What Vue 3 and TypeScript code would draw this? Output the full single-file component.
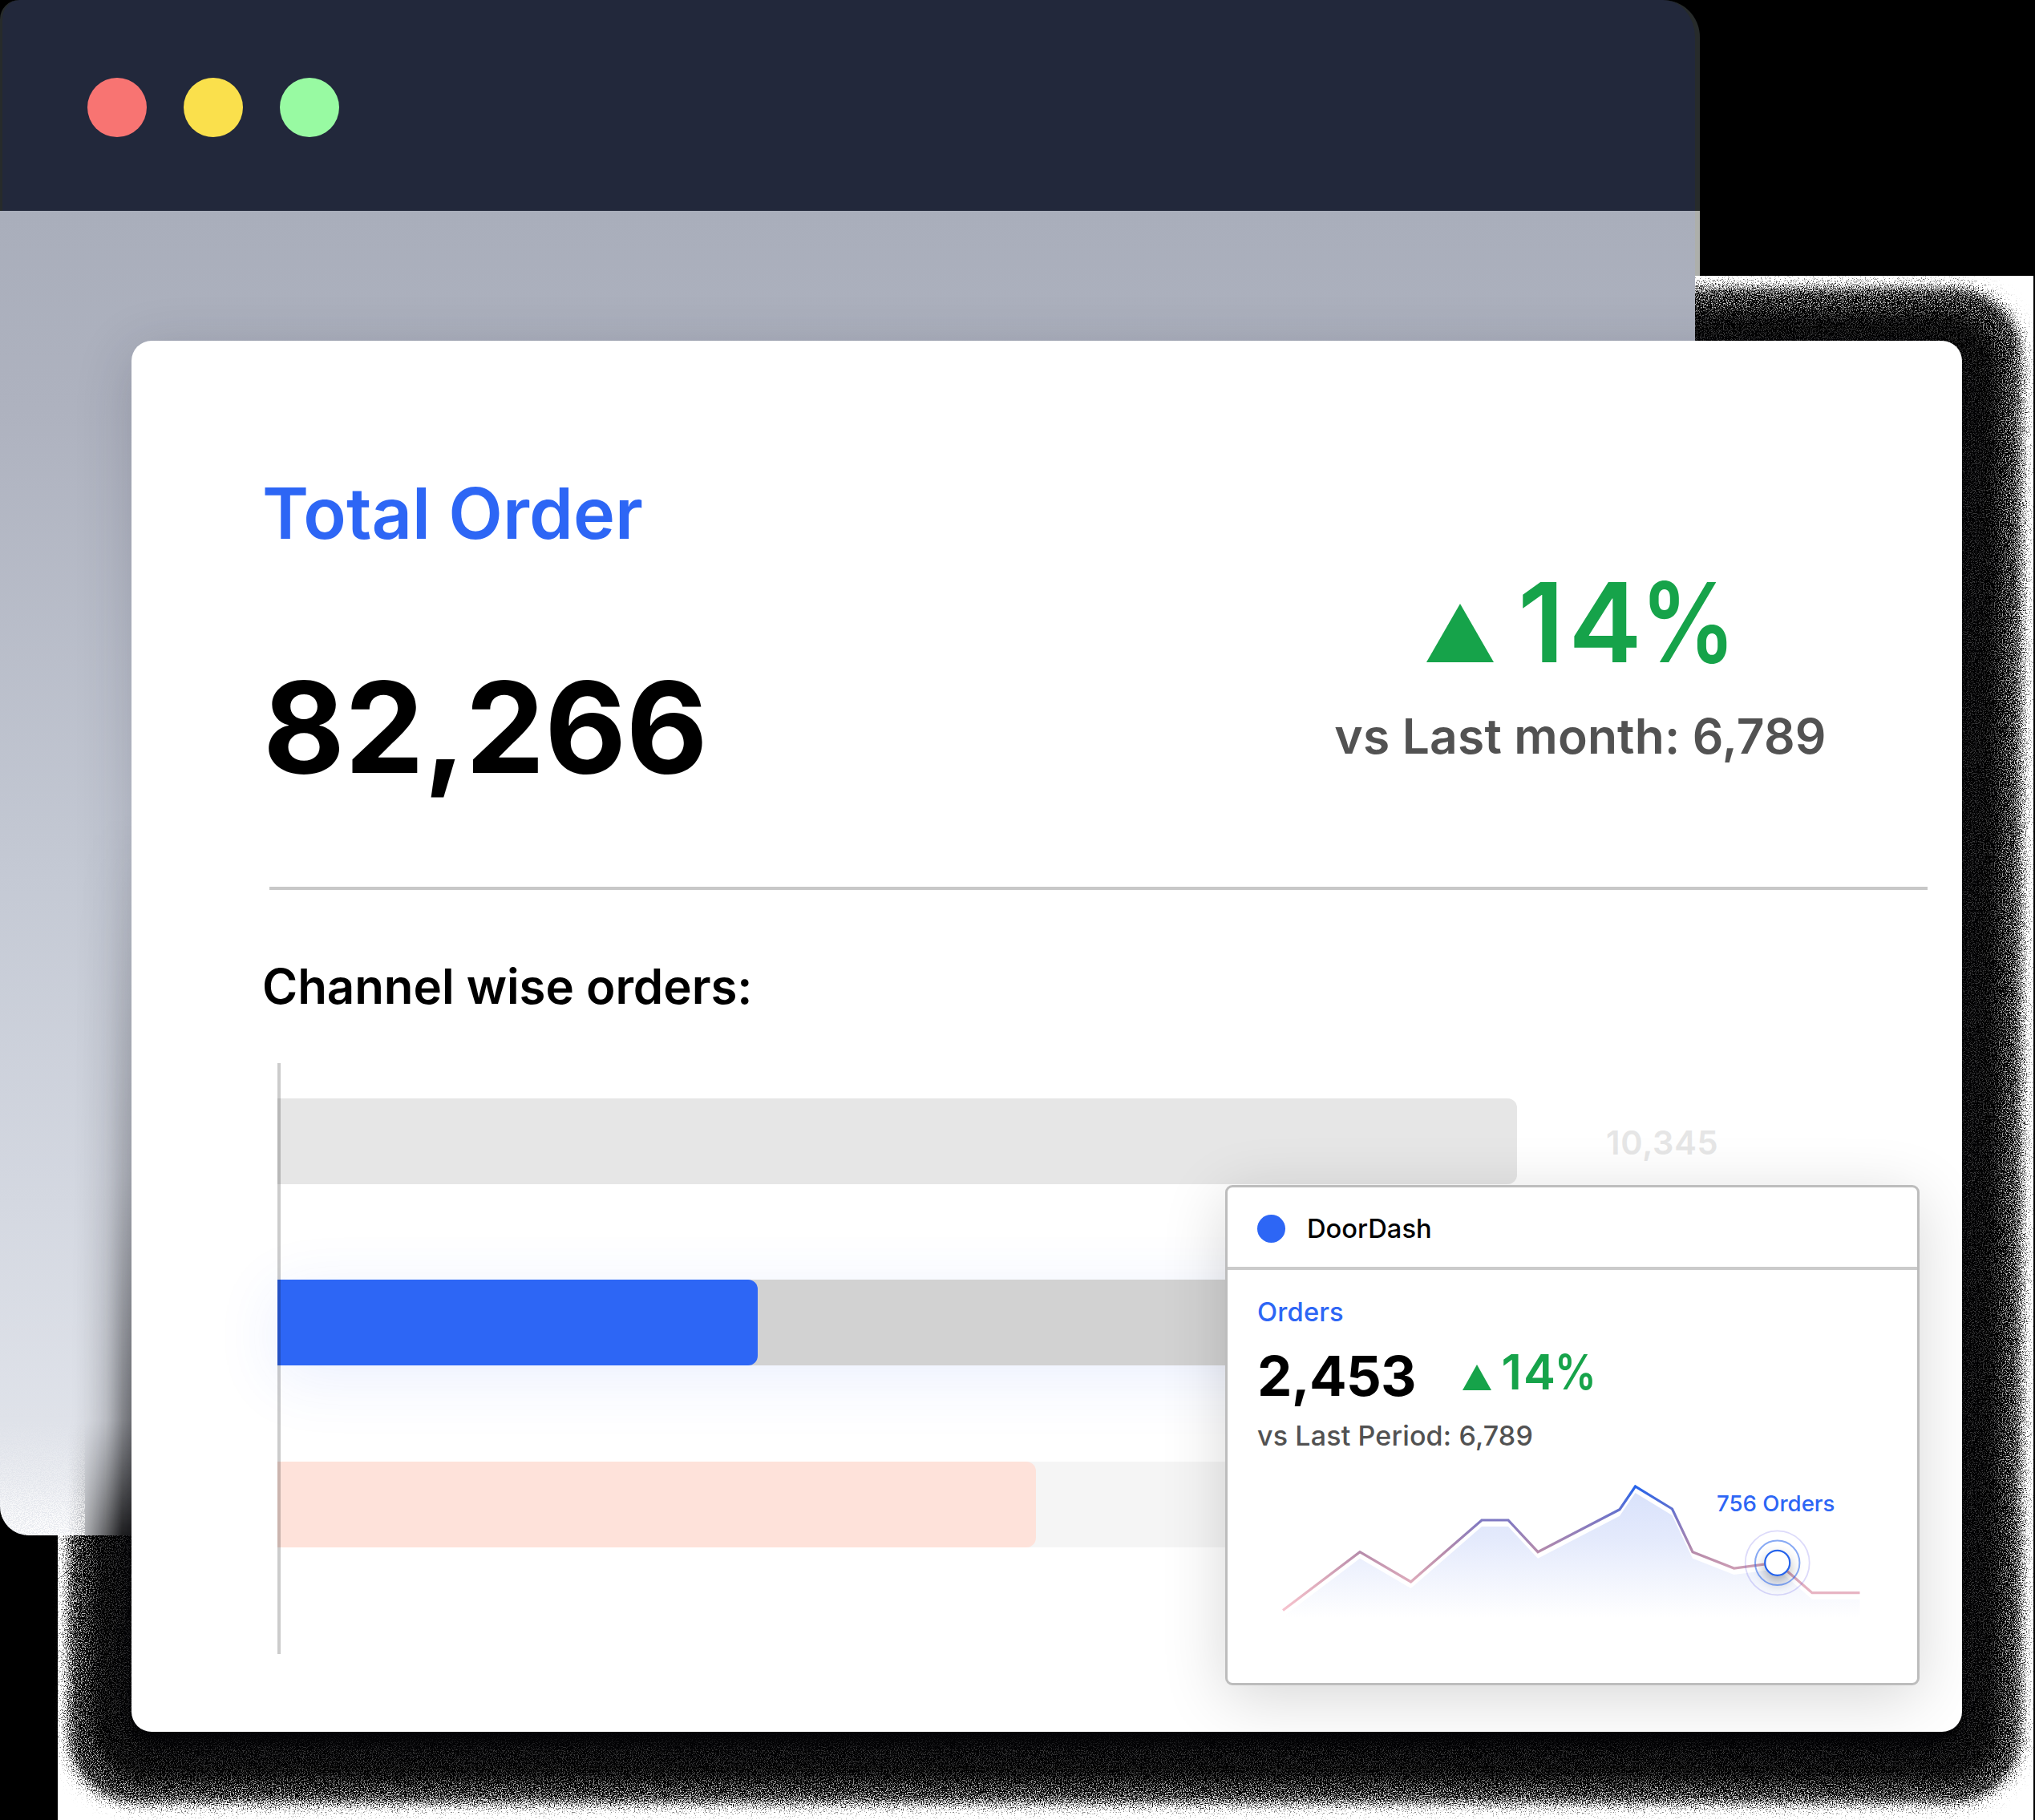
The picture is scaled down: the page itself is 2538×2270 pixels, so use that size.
<script setup lang="ts">
interface Channel { name: string; cls: string; value: number; total?: string }

const channels: Channel[] = [
  { name: 'first', cls: 'muted', value: 1546, total: '10,345' },
  { name: 'doordash', cls: 'active', value: 599 },
  { name: 'third', cls: 'peach', value: 946 },
]
const lights: string[] = ['#f87472', '#fae04c', '#98faa2']

const points: [number, number][] = [
  [14, 168.5], [110, 95.7], [173.6, 133], [262, 56], [295, 56], [332, 95.7], [434, 42.7],
  [453.5, 14], [499.5, 42], [525, 95.7], [576.6, 116], [630.7, 109], [674, 146.7], [733.5, 146.7],
]
const line = points.map((p) => p.join(',')).join(' ')
const area = points.map(([x, y]) => `${x},${y + 8}`).join(' ') + ' 733.5,185 14,185'
</script>

<template>
  <main class="scene">
    <svg class="halo" viewBox="0 0 2538 2270" aria-hidden="true">
      <defs>
        <filter id="grain" filterUnits="userSpaceOnUse" x="0" y="300" width="2538" height="1970" color-interpolation-filters="sRGB">
          <feGaussianBlur in="SourceGraphic" stdDeviation="13" result="soft" />
          <feTurbulence type="fractalNoise" baseFrequency="0.83" numOctaves="2" seed="4" />
          <feColorMatrix type="matrix" values="0 0 0 0 0  0 0 0 0 0  0 0 0 0 0  2.6 0 0 0 -0.8" result="noise" />
          <feComposite in="soft" in2="noise" operator="arithmetic" k2="3" k3="-2" />
        </filter>
        <filter id="specks" filterUnits="userSpaceOnUse" x="0" y="300" width="2538" height="1970" color-interpolation-filters="sRGB">
          <feGaussianBlur in="SourceGraphic" stdDeviation="11" result="soft" />
          <feTurbulence type="fractalNoise" baseFrequency="0.79" numOctaves="2" seed="9" />
          <feColorMatrix type="matrix" values="0 0 0 0 1  0 0 0 0 1  0 0 0 0 1  9 0 0 0 -4.8" result="noise" />
          <feComposite in="soft" in2="noise" operator="arithmetic" k1="1.3" />
        </filter>
      </defs>
      <path fill="#fff" d="M72 344H2536V2270H72Z" />
      <rect x="86" y="360" width="2434" height="1888" rx="84" filter="url(#grain)" />
      <rect x="128" y="398" width="2352" height="1812" rx="60" fill="none" stroke="#fff" stroke-width="66" opacity=".24" filter="url(#specks)" />
      <rect x="100" y="375" width="2408" height="1861" rx="84" fill="none" stroke="#fff" stroke-width="18" filter="url(#specks)" />
    </svg>

    <section class="window">
      <header class="titlebar">
        <span v-for="c in lights" :key="c" class="light" :style="{ background: c }"></span>
      </header>
      <div class="window-body">
        <div class="fade"></div>
        <svg class="dust" viewBox="0 0 164 150" width="164" height="150" aria-hidden="true">
          <defs>
            <linearGradient id="rise" x1="0" y1="0" x2="0" y2="1">
              <stop offset="0" stop-color="#fff" stop-opacity="0" />
              <stop offset=".55" stop-color="#fff" stop-opacity=".35" />
              <stop offset="1" stop-color="#fff" />
            </linearGradient>
            <filter id="dusty" x="0" y="0" width="1" height="1" color-interpolation-filters="sRGB">
              <feTurbulence type="fractalNoise" baseFrequency="0.8" numOctaves="2" seed="2" />
              <feColorMatrix type="matrix" values="0 0 0 0 1  0 0 0 0 1  0 0 0 0 1  6 0 0 0 -2.4" result="noise" />
              <feComposite in="SourceGraphic" in2="noise" operator="arithmetic" k1="1" />
            </filter>
          </defs>
          <rect width="106" height="150" fill="url(#rise)" filter="url(#dusty)" />
        </svg>
      </div>
    </section>

    <article class="card">
      <div class="summary">
        <div>
          <h1>Total Order</h1>
          <p class="total">82,266</p>
        </div>
        <div class="compare">
          <div class="delta">
            <svg width="84" height="73" viewBox="0 0 84 73"><path d="M42 0L84 73H0Z" /></svg>
            <span><b>1</b>4<em>%</em></span>
          </div>
          <p>vs Last month: 6,789</p>
        </div>
      </div>
      <hr />
      <h2>Channel wise orders:</h2>
      <div class="chart">
        <div v-for="c in channels" :key="c.name" class="row" :class="c.cls">
          <div class="track"><div class="bar" :style="{ width: c.value + 'px' }"></div></div>
          <span v-if="c.total" class="amount">{{ c.total }}</span>
        </div>
      </div>

      <aside class="popup">
        <header><i></i><span>DoorDash</span></header>
        <div class="popup-body">
          <h3>Orders</h3>
          <div class="figures">
            <strong>2,453</strong>
            <svg width="36" height="32" viewBox="0 0 36 32"><path d="M18 0L36 32H0Z" /></svg>
            <span><b>1</b>4<em>%</em></span>
          </div>
          <p>vs Last Period: 6,789</p>
          <div class="spark">
            <svg width="780" height="200" viewBox="0 0 780 200">
              <defs>
                <linearGradient id="stroke" gradientUnits="userSpaceOnUse" x1="0" y1="14" x2="0" y2="170">
                  <stop offset="0" stop-color="#2563eb" />
                  <stop offset=".27" stop-color="#7f78c2" />
                  <stop offset=".53" stop-color="#b78cab" />
                  <stop offset=".75" stop-color="#dcaabb" />
                  <stop offset="1" stop-color="#f8c4cf" />
                </linearGradient>
                <linearGradient id="fill" gradientUnits="userSpaceOnUse" x1="0" y1="14" x2="0" y2="178">
                  <stop offset="0" stop-color="#d8e1fb" />
                  <stop offset=".4" stop-color="#e4eafc" />
                  <stop offset="1" stop-color="#fff" />
                </linearGradient>
                <filter id="drop" x="-60%" y="-60%" width="220%" height="240%">
                  <feDropShadow dx="0" dy="8" stdDeviation="8" flood-color="#000" flood-opacity=".3" />
                </filter>
              </defs>
              <polygon :points="area" fill="url(#fill)" />
              <polyline :points="line" fill="none" stroke="url(#stroke)" stroke-width="3.2" />
              <circle cx="630.7" cy="109.3" r="15.5" fill="#fff" stroke="#2563eb" stroke-width="2.2" filter="url(#drop)" />
              <circle cx="630.7" cy="109.3" r="27.7" fill="none" stroke="#2563eb" stroke-opacity=".55" stroke-width="2" />
              <circle cx="630.7" cy="109.3" r="40" fill="none" stroke="#4f46e5" stroke-opacity=".2" stroke-width="1.8" />
            </svg>
            <span class="callout">756 Orders</span>
          </div>
        </div>
      </aside>
    </article>
  </main>
</template>

<style>
html, body { margin: 0; background: #000; }
</style>

<style scoped>
.scene { position: relative; width: 2538px; height: 2270px; overflow: hidden; background: #000; font-family: Inter, sans-serif; }
.halo { position: absolute; inset: 0; width: 2538px; height: 2270px; }
h1, h2, h3, p { margin: 0; white-space: nowrap; }
svg { display: block; }
b { font-weight: inherit; }
em { display: inline-block; font-style: normal; transform: scaleX(.86); transform-origin: 0 50%; }

.window { position: absolute; left: 0; top: 0; width: 2120px; height: 1915px; display: flex; flex-direction: column; }
.titlebar { box-sizing: border-box; height: 263px; padding: 97px 109px 0 106px; display: flex; gap: 46px; background: #22283b; border: solid #272b2b; border-width: 0 6px 0 3px; border-radius: 24px 46px 0 0; }
.light { width: 74px; height: 74px; border-radius: 50%; }
.window-body { position: relative; flex: 1; margin-right: 6px; background: linear-gradient(#a9aebb, #aeb2bf 15%, #c4c9d4 50%, #d4d8e1 75%, #e0e3ea 93%, #e9ebf0); border-radius: 0 0 0 36px; }
.window-body::after { content: ''; position: absolute; left: 100%; top: 0; width: 6px; height: 81px; background: #adafab; }
.fade { position: absolute; left: 84px; bottom: 0; width: 80px; height: 900px; background: linear-gradient(transparent 84%, rgba(0, 0, 0, .75)), linear-gradient(90deg, transparent, rgba(0, 0, 0, .25) 60%, rgba(0, 0, 0, .6)); -webkit-mask: linear-gradient(90deg, transparent, #000 85%), linear-gradient(transparent, rgba(0, 0, 0, .3) 50%, #000); -webkit-mask-composite: source-in; mask-composite: intersect; }
.dust { position: absolute; left: 0; bottom: 0; border-radius: 0 0 0 36px; overflow: hidden; }

.card { position: absolute; left: 164px; top: 425px; width: 2283px; height: 1735px; border-radius: 25px; background: #fff; display: flex; flex-direction: column; box-shadow: 0 14px 70px rgba(30, 30, 50, .2); }
.summary { box-sizing: border-box; height: 681px; padding: 171px 170px 0 163px; display: flex; justify-content: space-between; }
h1 { font-size: 88px; line-height: 88px; font-weight: 600; letter-spacing: .05px; color: #2d66f5; }
.total { margin: 144.5px 0 0 1px; font-size: 157px; line-height: 157px; font-weight: 700; letter-spacing: -.3px; }
.compare { margin-top: 111px; width: 612px; display: flex; flex-direction: column; align-items: center; }
.delta { align-self: flex-start; margin-left: 114px; display: flex; align-items: flex-start; gap: 30px; height: 138px; color: #16a34a; font-size: 137.5px; line-height: 138px; font-weight: 600; }
.delta svg { margin-top: 46px; fill: #16a34a; }
.delta b { letter-spacing: 5px; }
.delta em { margin-left: -2px; }
.compare p { margin-top: 43px; font-size: 60.5px; line-height: 60px; font-weight: 600; letter-spacing: .15px; color: #525252; }
hr { margin: 0 0 0 172px; width: 2068px; height: 4px; border: 0; background: #c8c8c8; }
h2 { margin: 90px 0 66px 163px; font-size: 60px; line-height: 60px; font-weight: 600; letter-spacing: -.06px; }
.chart { box-sizing: border-box; position: relative; margin-left: 182px; height: 737px; padding-top: 43.5px; display: flex; flex-direction: column; gap: 119.8px; }
.chart::after { content: ''; position: absolute; left: 0; top: 0; width: 4px; height: 737px; background: rgba(0, 0, 0, .2); }
.row { display: flex; align-items: center; height: 107px; gap: 111px; }
.track { width: 1546px; height: 107px; border-radius: 0 12px 12px 0; background: #f5f5f5; }
.bar { height: 107px; border-radius: 0 12px 12px 0; }
.muted .bar { background: #e6e6e6; }
.active .track { background: #d2d2d2; box-shadow: 0 16px 80px rgba(45, 102, 245, .1); }
.active .bar { background: #2d66f5; }
.peach .bar { background: #fee2da; }
.amount { margin-top: 3px; font-size: 41.5px; font-weight: 600; letter-spacing: .7px; color: #e6e6e6; }

.popup { position: absolute; box-sizing: border-box; left: 1364px; top: 1053px; width: 866px; height: 624px; border: 3px solid #bdbdbd; border-radius: 9px; background: #fff; box-shadow: 0 16px 80px rgba(0, 0, 0, .16); }
.popup header { box-sizing: border-box; height: 103px; padding: 3px 37px 0; display: flex; align-items: center; gap: 27px; border-bottom: 4px solid #cbcbcb; font-size: 32.7px; font-weight: 550; }
.popup i { width: 35px; height: 35px; border-radius: 50%; background: #2d66f5; }
.popup-body { padding: 34px 37px 0; }
h3 { font-size: 32.7px; line-height: 36px; font-weight: 550; letter-spacing: .2px; color: #2d66f5; }
.figures { display: flex; align-items: flex-start; height: 76px; margin-top: 24px; line-height: 76px; font-weight: 600; }
.figures strong { font-size: 69px; font-weight: 700; width: 255.5px; letter-spacing: -.8px; }
.figures svg { margin-top: 24px; fill: #16a34a; }
.figures span { margin-left: 13px; font-size: 60px; line-height: 67px; color: #16a34a; }
.figures b { letter-spacing: 2px; }
.figures em { margin-left: -1px; }
.popup-body p { margin-top: 17px; font-size: 34px; line-height: 40px; color: #525252; font-weight: 550; letter-spacing: .15px; }
.spark { position: relative; width: 780px; height: 200px; margin: 29px 0 0 18px; }
.callout { position: absolute; left: 555px; top: 18px; font-size: 27.6px; line-height: 34px; font-weight: 500; color: #2d66f5; white-space: nowrap; }
</style>
